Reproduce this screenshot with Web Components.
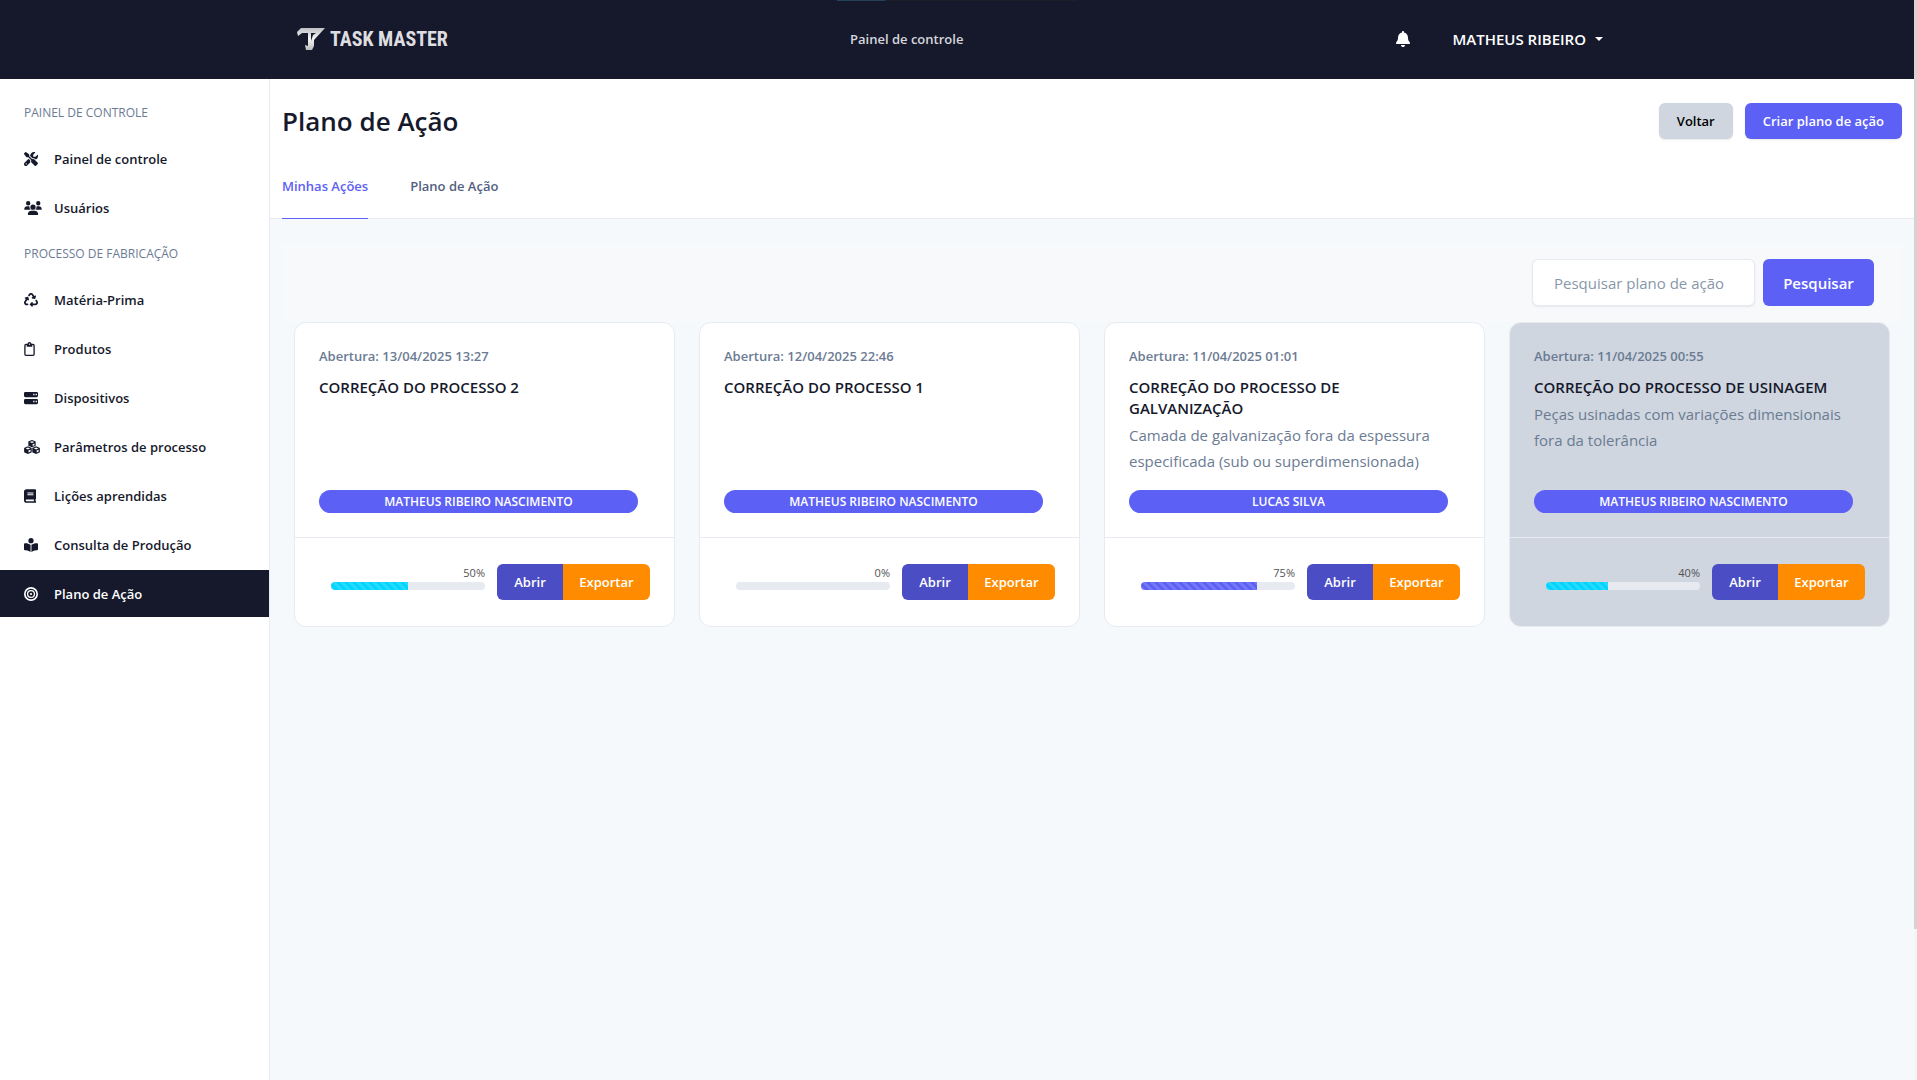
<!DOCTYPE html>
<html lang="pt-BR">
<head>
<meta charset="utf-8">
<meta name="viewport" content="width=device-width, initial-scale=1">
<title>Plano de Ação</title>
<style>
  :root {
    --ink: #16192c;
    --muted: #6b7b93;
    --primary: #5c60f5;
    --line: #e7eaf0;
    --grey: #cfd6df;
    --font: "Open Sans", "Noto Sans", sans-serif;
  }
  html, body { margin: 0; min-height: 100%; }
  body { font: 400 15px/26px var(--font); color: var(--ink); background: #f5f9fc; }
</style>
</head>
<body>
<app-shell>
  <top-bar slot="header" user="MATHEUS RIBEIRO"></top-bar>
  <side-nav slot="nav">
    <nav-heading>PAINEL DE CONTROLE</nav-heading>
    <nav-item icon="tools">Painel de controle</nav-item>
    <nav-item icon="users">Usuários</nav-item>
    <nav-heading>PROCESSO DE FABRICAÇÃO</nav-heading>
    <nav-item icon="recycle">Matéria-Prima</nav-item>
    <nav-item icon="clipboard">Produtos</nav-item>
    <nav-item icon="server">Dispositivos</nav-item>
    <nav-item icon="cubes">Parâmetros de processo</nav-item>
    <nav-item icon="book">Lições aprendidas</nav-item>
    <nav-item icon="reader">Consulta de Produção</nav-item>
    <nav-item icon="target" active>Plano de Ação</nav-item>
  </side-nav>
  <page-head heading="Plano de Ação">
    <ui-button slot="actions" tone="grey">Voltar</ui-button>
    <ui-button slot="actions" tone="primary">Criar plano de ação</ui-button>
    <tab-link slot="tabs" active>Minhas Ações</tab-link>
    <tab-link slot="tabs">Plano de Ação</tab-link>
  </page-head>
  <search-bar></search-bar>
  <card-grid>
    <plan-card opened="13/04/2025 13:27" heading="CORREÇÃO DO PROCESSO 2" owner="MATHEUS RIBEIRO NASCIMENTO" progress="50" tone="info"></plan-card>
    <plan-card opened="12/04/2025 22:46" heading="CORREÇÃO DO PROCESSO 1" owner="MATHEUS RIBEIRO NASCIMENTO" progress="0" tone="info"></plan-card>
    <plan-card opened="11/04/2025 01:01" heading="CORREÇÃO DO PROCESSO DE GALVANIZAÇÃO" owner="LUCAS SILVA" progress="75" tone="primary">Camada de galvanização fora da espessura especificada (sub ou superdimensionada)</plan-card>
    <plan-card opened="11/04/2025 00:55" heading="CORREÇÃO DO PROCESSO DE USINAGEM" owner="MATHEUS RIBEIRO NASCIMENTO" progress="40" tone="info" closed>Peças usinadas com variações dimensionais fora da tolerância</plan-card>
  </card-grid>
</app-shell>

<script>
const ICONS = {
  bell: ['0 0 448 512', '<path d="M224 0c-17.7 0-32 14.3-32 32V51.2C119 66 64 130.6 64 208v18.8c0 47-17.3 92.4-48.5 127.6l-7.4 8.3c-8.4 9.4-10.4 22.9-5.3 34.4S19.4 416 32 416H416c12.6 0 24-7.4 29.2-18.9s3.1-25-5.3-34.4l-7.4-8.3C401.3 319.2 384 273.9 384 226.8V208c0-77.4-55-142-128-156.8V32c0-17.7-14.3-32-32-32zm45.3 493.3c12-12 18.7-28.3 18.7-45.3H224 160c0 17 6.7 33.3 18.7 45.3s28.3 18.7 45.3 18.7s33.3-6.7 45.3-18.7z"/>'],
  tools: ['0 0 512 512', '<path d="M78.6 5C69.1-2.4 55.6-1.5 47 7L7 47c-8.5 8.5-9.4 22-2.1 31.6l80 104c4.5 5.9 11.6 9.4 19 9.4h54.1l109 109c-14.7 29-10 65.4 14.3 89.6l112 112c12.5 12.5 32.8 12.5 45.3 0l64-64c12.5-12.5 12.5-32.8 0-45.3l-112-112c-24.2-24.2-60.6-29-89.6-14.3l-109-109V104c0-7.5-3.5-14.5-9.4-19L78.6 5zM19.9 396.1C7.2 408.8 0 426.1 0 444.1C0 481.6 30.4 512 67.9 512c18 0 35.3-7.2 48-19.9L233.7 374.3c-7.8-20.9-9-43.6-3.6-65.1l-61.7-61.7L19.9 396.1zM512 144c0-10.5-1.1-20.7-3.2-30.5c-2.4-11.2-16.1-14.1-24.2-6l-63.9 63.9c-3 3-7.1 4.7-11.3 4.7H352c-8.8 0-16-7.2-16-16V102.6c0-4.2 1.7-8.3 4.7-11.3l63.9-63.9c8.1-8.1 5.2-21.8-6-24.2C388.7 1.1 378.5 0 368 0C288.5 0 224 64.5 224 144l0 .8 85.3 85.3c36-9.1 75.8 .5 104 28.7L429 274.5c49-23 83-72.8 83-130.5zM56 432a24 24 0 1 1 48 0 24 24 0 1 1 -48 0z"/>'],
  users: ['0 0 640 512', '<path d="M144 0a80 80 0 1 1 0 160A80 80 0 1 1 144 0zM512 0a80 80 0 1 1 0 160A80 80 0 1 1 512 0zM0 298.7C0 239.8 47.8 192 106.7 192h42.7c15.9 0 31 3.5 44.6 9.7c-1.3 7.2-1.9 14.7-1.9 22.3c0 38.2 16.8 72.5 43.3 96H21.3C9.6 320 0 310.4 0 298.7zM405.3 320c26.6-23.5 43.3-57.8 43.3-96c0-7.6-.7-15-1.9-22.3c13.6-6.3 28.7-9.7 44.6-9.7h42.7C592.2 192 640 239.8 640 298.7c0 11.8-9.6 21.3-21.3 21.3H405.3zM224 224a96 96 0 1 1 192 0 96 96 0 1 1 -192 0zM128 485.3C128 411.7 187.7 352 261.3 352H378.7C452.3 352 512 411.7 512 485.3c0 14.7-11.9 26.7-26.7 26.7H154.7c-14.7 0-26.7-11.9-26.7-26.7z"/>'],
  recycle: ['0 0 512 512', '<path d="M174.7 45.1C192.2 17 223 0 256 0s63.8 17 81.3 45.1l38.6 61.7 27-15.6c8.4-4.9 18.9-4.2 26.6 1.7s11.1 15.9 8.6 25.3l-23.4 87.4c-3.4 12.8-16.6 20.4-29.4 17l-87.4-23.4c-9.4-2.5-16.3-10.4-17.6-20s3.4-19.1 11.8-23.9l28.4-16.4L283 79c-5.8-9.3-16-15-27-15s-21.2 5.7-27 15l-17.5 28c-9.2 14.8-28.6 19.5-43.6 10.5c-15.3-9.2-20.2-29.2-10.7-44.4l17.5-28zM429.5 251.9c15-9 34.4-4.3 43.6 10.5l24.4 39.1c9.4 15.1 14.4 32.4 14.6 50.2c.3 53.1-42.7 96.4-95.8 96.4L320 448v32c0 9.7-5.8 18.5-14.8 22.2s-19.3 1.7-26.2-5.2l-64-64c-9.4-9.4-9.4-24.6 0-33.9l64-64c6.9-6.9 17.2-8.9 26.2-5.2s14.8 12.5 14.8 22.2v32l96.2 0c17.6 0 31.9-14.4 31.8-32c0-5.9-1.7-11.7-4.8-16.7l-24.4-39.1c-9.5-15.2-4.7-35.2 10.7-44.4zm-364.6-31L36 204.2c-8.4-4.9-13.1-14.3-11.8-23.9s8.2-17.5 17.6-20l87.4-23.4c12.8-3.4 26 4.2 29.4 17L182 241.2c2.5 9.4-.9 19.3-8.6 25.3s-18.2 6.6-26.6 1.7l-26.5-15.3L68.8 335.3c-3.1 5-4.8 10.8-4.8 16.7c-.1 17.6 14.2 32 31.8 32l32.2 0c17.7 0 32 14.3 32 32s-14.3 32-32 32l-32.2 0C42.7 448-.3 404.8 0 351.6c.1-17.8 5.1-35.1 14.6-50.2l50.3-80.5z"/>'],
  clipboard: ['0 0 384 512', '<path fill-rule="evenodd" d="M64 64h56C126 26 156 0 192 0s66 26 72 64h56a64 64 0 0 1 64 64v320a64 64 0 0 1-64 64H64a64 64 0 0 1-64-64V128a64 64 0 0 1 64-64zm0 48a16 16 0 0 0-16 16v320a16 16 0 0 0 16 16h256a16 16 0 0 0 16-16V128a16 16 0 0 0-16-16h-24v40a24 24 0 0 1-24 24H112a24 24 0 0 1-24-24v-40zM192 56a24 24 0 1 0 0 48a24 24 0 1 0 0-48z"/>'],
  server: ['0 0 512 512', '<path fill-rule="evenodd" d="M48 32h416a48 48 0 0 1 48 48v96a48 48 0 0 1-48 48H48a48 48 0 0 1-48-48V80a48 48 0 0 1 48-48zm288 72v48h48v-48zm88 0v48h48v-48zM48 288h416a48 48 0 0 1 48 48v96a48 48 0 0 1-48 48H48a48 48 0 0 1-48-48v-96a48 48 0 0 1 48-48zm288 72v48h48v-48zm88 0v48h48v-48z"/>'],
  cubes: ['0 0 576 512', '<path fill-rule="evenodd" d="M288 0l118 44q16 6 16 24v140l-134 56-134-56V68q0-18 16-24zm0 44l-84 31 84 34 84-34zm22 112v62l68-28v-62zM138 232l126 52q14 6 14 22v128q0 16-14 24L138 512 14 458q-14-8-14-24V306q0-16 14-22zm0 44l-82 34 82 34 82-34zm22 112v68l74-34v-66zM438 232l124 52q14 6 14 22v128q0 16-14 24l-124 54-126-54q-14-8-14-24V306q0-16 14-22zm0 44l-82 34 82 34 82-34zm22 112v68l70-34v-66z"/>'],
  book: ['0 0 448 512', '<path fill-rule="evenodd" d="M96 0h320a32 32 0 0 1 32 32v320c0 12-6 22-16 28v68a32 32 0 0 1 0 64H96a96 96 0 0 1-96-96V96A96 96 0 0 1 96 0zm0 384a32 32 0 0 0 0 64h272v-64zM128 128v32h224v-32zm0 64v32h224v-32z"/>'],
  reader: ['0 0 512 512', '<path d="M160 96a96 96 0 1 1 192 0 96 96 0 1 1-192 0zm80 152v264l-48-25c-44-23-92-34-142-37l-18-2c-18-1-32-15-32-32V224c0-18 14-32 32-32h30c60 0 122 20 178 56zm32 264V248c56-36 118-56 178-56h30c18 0 32 14 32 32v192c0 17-14 31-32 32l-18 2c-50 3-98 14-142 37z"/>'],
  target: ['0 0 512 512', '<g fill="none" stroke="currentColor"><circle cx="256" cy="256" r="226" stroke-width="60"/><circle cx="256" cy="256" r="126" stroke-width="46"/></g><circle cx="256" cy="256" r="40"/>']
};
const icon = (name, height) => {
  const [box, body] = ICONS[name];
  const [, , w, h] = box.split(' ');
  return `<svg viewBox="${box}" height="${height}" width="${Math.round(height * w / h)}" fill="currentColor" aria-hidden="true">${body}</svg>`;
};
const define = (tag, view) => customElements.define(tag, class extends HTMLElement {
  connectedCallback() {
    if (this.shadowRoot) return;
    this.attachShadow({ mode: 'open' }).innerHTML =
      `<style>*{box-sizing:border-box}svg{display:block;flex:none}button,input{font:inherit;margin:0}a{color:inherit;text-decoration:none}</style>` + view(this);
  }
});

define('app-shell', () => `
  <style>
    :host { display: grid; grid-template-columns: minmax(0, 1fr) 3px; min-height: 100vh; }
    .app { display: grid; grid-template: auto 1fr / 270px minmax(0, 1fr); }
    header { grid-column: 1 / -1; }
    main { display: flex; flex-direction: column; }
    .track { background: #f5f5f5; }
    .thumb { height: 86%; background: #d6d3d4; }
  </style>
  <div class="app">
    <header><slot name="header"></slot></header>
    <slot name="nav"></slot>
    <main><slot></slot></main>
  </div>
  <div class="track"><div class="thumb"></div></div>`);

define('top-bar', el => `
  <style>
    :host { display: block; background: #16192c; color: #fff; font-weight: 600; }
    .loader { width: 240px; height: 1px; margin: 0 auto; background: linear-gradient(90deg, #24435a 20%, #1c1f2a 20%); }
    .bar { display: grid; grid-template-columns: 11fr auto 13fr; align-items: center; max-width: 1320px; height: 78px; margin: 0 auto; padding-bottom: 2px; }
    .logo { display: flex; align-items: center; gap: 5px; font: 700 20px/24px "Roboto Condensed", "Liberation Sans Narrow", "Liberation Sans", sans-serif; color: #dedee0; }
    .menu { font-size: 13px; color: #d5d6dc; }
    .right { display: flex; align-items: center; justify-content: flex-end; gap: 42px; padding-right: 14px; }
    button { display: flex; align-items: center; border: 0; padding: 0; background: none; color: inherit; font-weight: 600; }
    .user { gap: 9px; font-size: 15px; }
    .caret { border: 4px solid transparent; border-top-color: #fff; border-bottom: 0; }
  </style>
  <div class="loader"></div>
  <div class="bar">
    <a class="logo" href="#"><svg width="28" height="22" viewBox="0 0 28 22"><defs><linearGradient id="m" x1="0" y1="0" x2="0" y2="1"><stop offset="0" stop-color="#bfc0c4"/><stop offset=".5" stop-color="#f6f6f6"/><stop offset="1" stop-color="#b9babd"/></linearGradient></defs><path fill="url(#m)" fill-rule="evenodd" d="M4 0H28L17 12V18L15 22H9L8 17L11 18V5H5L1 8L0 4ZM14 5V13L16 7L19 5Z"/></svg><span>TASK MASTER</span></a>
    <a class="menu" href="#">Painel de controle</a>
    <div class="right">
      <button aria-label="Notificações">${icon('bell', 16)}</button>
      <button class="user">${el.getAttribute('user')}<span class="caret"></span></button>
    </div>
  </div>`);

define('side-nav', () => `
  <style>
    :host { display: block; background: #fff; border-right: 1px solid var(--line); padding-top: 13px; }
    nav { display: flex; flex-direction: column; gap: 2px; }
  </style>
  <nav><slot></slot></nav>`);

define('nav-heading', () => `
  <style>:host { display: block; padding: 11px 24px 10px; font-size: 12px; line-height: 20px; color: var(--muted); }</style>
  <slot></slot>`);

define('nav-item', el => `
  <style>
    :host { display: block; font-size: 13px; font-weight: 600; line-height: 20px; }
    :host([active]) { background: #16192c; color: #fff; }
    a { display: flex; align-items: center; height: 47px; padding-left: 24px; }
    .icon { width: 30px; }
  </style>
  <a href="#"><span class="icon">${icon(el.getAttribute('icon'), 14)}</span><slot></slot></a>`);

define('page-head', el => `
  <style>
    :host { display: block; background: #fff; border-bottom: 1px solid var(--line); padding: 24px 12px 0; }
    .row { display: flex; align-items: center; gap: 12px; }
    h1 { flex: 1; margin: 0; font-size: 26px; line-height: 36px; font-weight: 600; }
    nav { display: flex; gap: 42px; padding-top: 26px; margin-bottom: -1px; }
  </style>
  <div class="row"><h1>${el.getAttribute('heading')}</h1><slot name="actions"></slot></div>
  <nav><slot name="tabs"></slot></nav>`);

define('tab-link', () => `
  <style>
    :host { display: block; padding: 10px 0 21px; font-size: 13px; font-weight: 600; line-height: 22px; color: #525f7f; border-bottom: 1px solid transparent; }
    :host([active]) { color: var(--primary); border-color: var(--primary); }
  </style>
  <a href="#"><slot></slot></a>`);

define('ui-button', () => `
  <style>
    :host { display: block; --bg: var(--primary); }
    :host([tone=grey]) { --bg: var(--grey); color: #000; }
    :host([tone=primary]) { color: #fff; }
    button { display: block; height: 36px; padding: 0 18px; border: 0; border-radius: 6px; background: var(--bg); color: inherit; font-size: 13px; font-weight: 600; box-shadow: 0 1px 2px #16192c1a; }
  </style>
  <button><slot></slot></button>`);

define('search-bar', () => `
  <style>
    :host { display: block; margin: 24px 12px 0; background: #f8f9fb; }
    form { display: flex; justify-content: flex-end; gap: 8px; padding: 16px 28px; }
    input, button { height: 47px; border-radius: 6px; font-size: 15px; }
    input { width: 223px; padding: 0 12px 0 21px; border: 1px solid var(--line); background: #fff; box-shadow: 0 1px 2px #16192c14; }
    input::placeholder { color: #8898a9; opacity: 1; }
    button { width: 111px; padding: 0; border: 0; background: var(--primary); color: #fff; font-weight: 600; }
  </style>
  <form><input type="text" aria-label="Pesquisar plano de ação" placeholder="Pesquisar plano de ação"><button type="button">Pesquisar</button></form>`);

define('card-grid', () => `
  <style>
    :host { display: grid; grid-template-columns: repeat(4, minmax(0, 1fr)); gap: 24px; padding: 0 24px 24px; }
  </style>
  <slot></slot>`);

define('plan-card', el => {
  const a = name => el.getAttribute(name);
  return `
  <style>
    :host { display: flex; flex-direction: column; background: #fff; border: 1px solid var(--line); border-radius: 12px; min-height: 305px; box-sizing: border-box; }
    :host([closed]) { background: var(--grey); }
    .body { flex: 1; display: flex; flex-direction: column; padding: 22px 24px 24px; }
    .opened { font-size: 13px; font-weight: 600; line-height: 22px; color: var(--muted); }
    h2 { margin: 10px 12px 3px 0; font-size: 15px; line-height: 21px; font-weight: 600; }
    p { margin: 0; color: var(--muted); }
    .owner { margin-top: auto; margin-right: 12px; border-radius: 12px; background: var(--primary); color: #fff; text-align: center; font-size: 12px; font-weight: 600; line-height: 23px; }
    footer { display: flex; align-items: center; gap: 12px; height: 89px; padding: 0 24px 0 36px; border-top: 1px solid var(--line); }
    .meter { flex: 1; padding-bottom: 11px; }
    .value { text-align: right; font-size: 11px; line-height: 18px; color: #525252; }
    .track { height: 8px; border-radius: 4px; overflow: hidden; background: #e7eaf0; }
    .fill { height: 8px; width: ${a('progress')}%; background: linear-gradient(45deg, #ffffff26 25%, transparent 25%, transparent 50%, #ffffff26 50%, #ffffff26 75%, transparent 75%) 0 0 / 8px 8px ${a('tone') === 'info' ? '#00d4ff' : 'var(--primary)'}; }
    .group { display: flex; border-radius: 6px; overflow: hidden; }
    button { height: 36px; border: 0; padding: 0; color: #fff; font-size: 13px; font-weight: 600; }
    .open { width: 66px; background: #4a4dc4; }
    .export { width: 87px; background: #ff8c00; }
  </style>
  <div class="body">
    <div class="opened">Abertura: ${a('opened')}</div>
    <h2>${a('heading')}</h2>
    <p><slot></slot></p>
    <div class="owner">${a('owner')}</div>
  </div>
  <footer>
    <div class="meter">
      <div class="value">${a('progress')}%</div>
      <div class="track" role="progressbar" aria-label="Progresso" aria-valuenow="${a('progress')}"><div class="fill"></div></div>
    </div>
    <div class="group"><button class="open">Abrir</button><button class="export">Exportar</button></div>
  </footer>`;
});
</script>
</body>
</html>
